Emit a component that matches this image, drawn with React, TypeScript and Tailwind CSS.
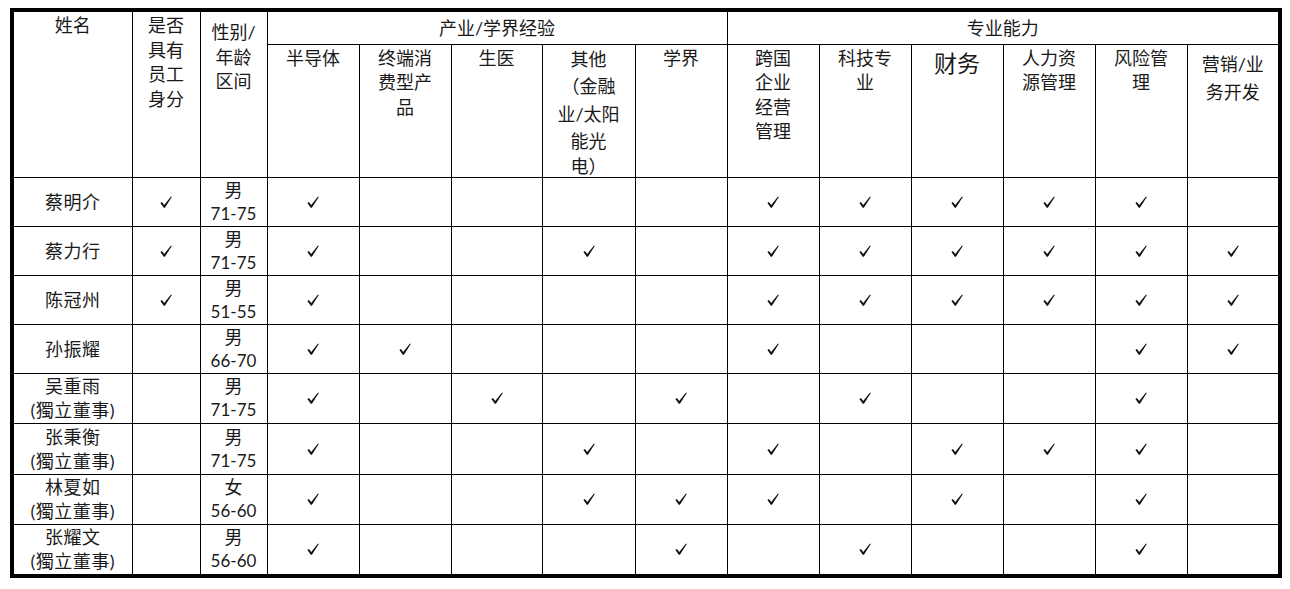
import React from 'react'

type Director = {
    name: string
    independent?: boolean
    employee?: boolean
    sex: string
    age: string
    marks: number[]
}

const directors: Director[] = [
    { name: '蔡明介', employee: true, sex: '男', age: '71-75', marks: [0, 5, 6, 7, 8, 9] },
    { name: '蔡力行', employee: true, sex: '男', age: '71-75', marks: [0, 3, 5, 6, 7, 8, 9, 10] },
    { name: '陈冠州', employee: true, sex: '男', age: '51-55', marks: [0, 5, 6, 7, 8, 9, 10] },
    { name: '孙振耀', sex: '男', age: '66-70', marks: [0, 1, 5, 9, 10] },
    { name: '吴重雨', independent: true, sex: '男', age: '71-75', marks: [0, 2, 4, 6, 9] },
    { name: '张秉衡', independent: true, sex: '男', age: '71-75', marks: [0, 3, 5, 7, 8, 9] },
    { name: '林夏如', independent: true, sex: '女', age: '56-60', marks: [0, 3, 4, 5, 7, 9] },
    { name: '张耀文', independent: true, sex: '男', age: '56-60', marks: [0, 4, 6, 9] },
]

const rowHeights = ['h-[49px]', 'h-[49px]', 'h-[49px]', 'h-[49px]', 'h-[50px]', 'h-[51px]', 'h-[50px]', 'h-[50px]']

// second header row, one entry per skill column; lineClass overrides the line height of single lines
const skills: { lines: string[]; className?: string; lineClass?: string[] }[] = [
    { lines: ['半导体'] },
    { lines: ['终端消', '费型产', '品'] },
    { lines: ['生医'] },
    {
        lines: ['其他', '（金融', '业/太阳', '能光', '电）'],
        className: 'pt-0 leading-[27.5px]',
        lineClass: ['', '', '', '', 'leading-[20px]'],
    },
    { lines: ['学界'] },
    { lines: ['跨国', '企业', '经营', '管理'] },
    { lines: ['科技专', '业'] },
    { lines: ['财务'], className: 'pt-[3px] text-[23px] leading-[30px]' },
    { lines: ['人力资', '源管理'] },
    { lines: ['风险管', '理'] },
    { lines: ['营销/业', '务开发'], className: 'pt-[5px] leading-[28.5px]' },
]

const colWidths = ['w-[118px]', 'w-[68px]', 'w-[67px]', 'w-[92px]', 'w-[92px]', 'w-[91px]', 'w-[93px]', 'w-[92px]', 'w-[92px]', 'w-[92px]', 'w-[92px]', 'w-[92px]', 'w-[92px]', 'w-[91px]']

const Check: React.FC = () => (
    <svg viewBox="0 0 12 12" className="mx-auto block h-[12px] w-[12px]">
        <path d="M0.4 7 L1.9 6.1 L4.2 8.9 L11 0.5 L11.8 1.1 L4.9 11.7 L3.8 11.7 Z" fill="#111" />
    </svg>
)

const cell = 'border border-black p-0 text-center'
const headCell = cell + ' align-top pt-[1px] leading-[24.5px] font-normal'

const App: React.FC = () => {
    return (
        <div className="min-h-screen bg-white pt-[8px] pl-[10px] text-[18px] text-[#1a1a1a] font-['Lato','Noto_Sans_CJK_SC',sans-serif]">
            <div className="w-fit border-4 border-black">
                <table className="w-[1264px] table-fixed border-collapse border-hidden">
                    <colgroup>
                        {colWidths.map((w, i) => (
                            <col key={i} className={w} />
                        ))}
                    </colgroup>
                    <thead>
                        <tr className="h-[32px]">
                            <th rowSpan={2} className={headCell}>姓名</th>
                            <th rowSpan={2} className={headCell}>
                                是否<br />具有<br />员工<br />身分
                            </th>
                            <th rowSpan={2} className={headCell + ' pt-[8px]'}>
                                性别/<br />年龄<br />区间
                            </th>
                            <th colSpan={5} className={cell + ' align-middle font-normal leading-[24px]'}>产业/学界经验</th>
                            <th colSpan={6} className={cell + ' align-middle font-normal leading-[24px]'}>专业能力</th>
                        </tr>
                        <tr className="h-[133px]">
                            {skills.map((s, i) => (
                                <th key={i} className={headCell + ' ' + (s.className ?? '')}>
                                    {s.lines.map((l, j) => (
                                        <div key={j} className={s.lineClass?.[j]}>{l}</div>
                                    ))}
                                </th>
                            ))}
                        </tr>
                    </thead>
                    <tbody>
                        {directors.map((d, i) => (
                            <tr key={d.name} className={rowHeights[i]}>
                                <td className={cell + ' align-middle leading-[24px] tracking-[0.5px]'}>
                                    <div>{d.name}</div>
                                    {d.independent && <div>(獨立董事)</div>}
                                </td>
                                <td className={cell + ' align-middle'}>{d.employee && <Check />}</td>
                                <td className={cell + ' align-middle leading-[24px]'}>
                                    <div>{d.sex}</div>
                                    <div className="text-[17px]">{d.age}</div>
                                </td>
                                {skills.map((_, k) => (
                                    <td key={k} className={cell + ' align-middle'}>
                                        {d.marks.includes(k) && <Check />}
                                    </td>
                                ))}
                            </tr>
                        ))}
                    </tbody>
                </table>
            </div>
        </div>
    )
}

export default App
